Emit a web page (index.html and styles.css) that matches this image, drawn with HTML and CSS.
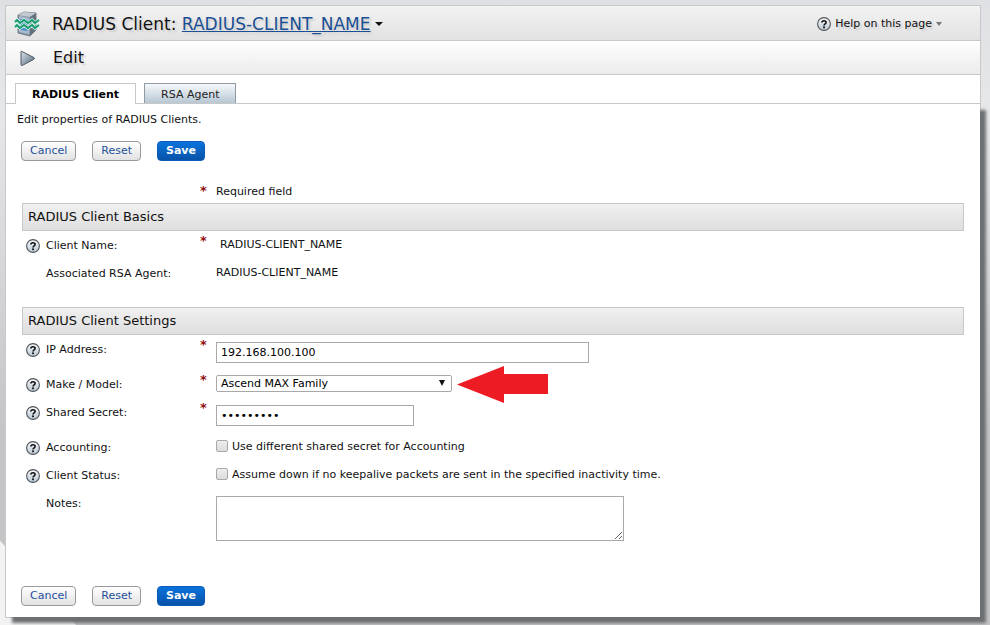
FILE: index.html
```html
<!DOCTYPE html>
<html lang="en">
<head>
    <meta charset="UTF-8">
    <meta name="viewport" content="width=device-width, initial-scale=1.0">
    <title>RADIUS Client: Edit</title>
    <link rel="stylesheet" href="styles.css">
</head>
<body>
    <!-- shared icons -->
    <svg class="defs" width="0" height="0" aria-hidden="true">
        <defs>
            <linearGradient id="helpFill" x1="0" y1="0" x2="0" y2="1">
                <stop offset="0" stop-color="#fafafb"/>
                <stop offset="1" stop-color="#b9c7d3"/>
            </linearGradient>
            <linearGradient id="playFill" x1="0" y1="0" x2="1" y2="1">
                <stop offset="0" stop-color="#dde4ea"/>
                <stop offset="1" stop-color="#4d6478"/>
            </linearGradient>
            <symbol id="help" viewBox="0 0 14 14">
                <circle cx="7" cy="7" r="6.4" fill="url(#helpFill)" stroke="#50565d" stroke-width="1.1"/>
                <path d="M4.9 5.5C4.9 3.1 9.1 3.1 9.1 5.4C9.1 6.8 7 6.8 7 8.5" fill="none" stroke="#111" stroke-width="1.6"/>
                <rect x="6.1" y="9.4" width="1.8" height="1.8" fill="#111"/>
            </symbol>
        </defs>
    </svg>

    <div class="page">
        <header class="title-bar">
            <svg class="client-icon" viewBox="0 0 26 26" width="26" height="26" aria-hidden="true">
                <path d="M4 4L10 1L22 2L22 19L16 25L4 22Z" fill="#8997a5" stroke="#5d6a77" stroke-width="0.8"/>
                <path d="M4 4L10 1L22 2L16 6Z" fill="#c3cad1"/>
                <path d="M16 6L22 2L22 19L16 25Z" fill="#64717f"/>
                <path d="M5 5L15 7V23L5 21Z" fill="#a9bccf"/>
                <path d="M6 8L14 9V20L6 19Z" fill="#4f8fc9"/>
                <path d="M1 11L3 9L6 12L10 9L14 12L18 9L21 12L25 9M1 16L3 14L6 17L10 14L14 17L18 14L21 17L25 14" fill="none" stroke="#d5f0e5" stroke-width="3.4"/>
                <path d="M1 11L3 9L6 12L10 9L14 12L18 9L21 12L25 9M1 16L3 14L6 17L10 14L14 17L18 14L21 17L25 14" fill="none" stroke="#159a70" stroke-width="1.9"/>
            </svg>
            <h1>RADIUS Client: <a href="#">RADIUS-CLIENT_NAME</a></h1>
            <span class="caret"></span>
            <a class="help-link" href="#">
                <svg class="help-icon"><use href="#help"/></svg>
                Help on this page
                <span class="caret caret-small"></span>
            </a>
        </header>

        <div class="action-bar">
            <svg class="play-icon" viewBox="0 0 16 17" width="16" height="17" aria-hidden="true">
                <path d="M2 1.5Q1 0.8 1 2V14.5Q1 16 2.4 15.4L14 9.2Q15.2 8.4 14 7.6Z" fill="url(#playFill)" stroke="#4f5a64"/>
            </svg>
            <h2>Edit</h2>
        </div>

        <main class="panel">
            <nav class="tabs">
                <a class="tab active" href="#">RADIUS Client</a>
                <a class="tab" href="#">RSA Agent</a>
            </nav>

            <form class="content">
                <p class="intro">Edit properties of RADIUS Clients.</p>
                <div class="buttons">
                    <button type="button">Cancel</button>
                    <button type="reset">Reset</button>
                    <button type="submit" class="save">Save</button>
                </div>

                <p class="required-note"><span class="star">*</span>Required field</p>

                <section>
                    <h3>RADIUS Client Basics</h3>
                    <div class="row">
                        <svg class="help-icon"><use href="#help"/></svg>
                        <span class="label">Client Name:</span>
                        <span class="star">*</span>
                        <div class="field indent">RADIUS-CLIENT_NAME</div>
                    </div>
                    <div class="row">
                        <span class="label">Associated RSA Agent:</span>
                        <div class="field">RADIUS-CLIENT_NAME</div>
                    </div>
                </section>

                <section>
                    <h3>RADIUS Client Settings</h3>
                    <div class="row">
                        <svg class="help-icon"><use href="#help"/></svg>
                        <label class="label" for="ip">IP Address:</label>
                        <span class="star">*</span>
                        <div class="field"><input type="text" class="ip" id="ip" value="192.168.100.100"></div>
                    </div>
                    <div class="row">
                        <svg class="help-icon"><use href="#help"/></svg>
                        <label class="label" for="model">Make / Model:</label>
                        <span class="star">*</span>
                        <div class="field select-field">
                            <select id="model">
                                <option>Ascend MAX Family</option>
                            </select>
                            <span class="caret select-caret"></span>
                            <svg class="pointer" viewBox="0 0 91 37" width="91" height="37" aria-hidden="true">
                                <path d="M0 18.5L47 0V8H91V28H47V37Z" fill="#ed1c24"/>
                            </svg>
                        </div>
                    </div>
                    <div class="row">
                        <svg class="help-icon"><use href="#help"/></svg>
                        <label class="label" for="secret">Shared Secret:</label>
                        <span class="star">*</span>
                        <div class="field"><input type="password" class="secret" id="secret" value="secret123"></div>
                    </div>
                    <div class="row">
                        <svg class="help-icon"><use href="#help"/></svg>
                        <span class="label">Accounting:</span>
                        <div class="field check">
                            <input type="checkbox" id="accounting">
                            <label for="accounting">Use different shared secret for Accounting</label>
                        </div>
                    </div>
                    <div class="row">
                        <svg class="help-icon"><use href="#help"/></svg>
                        <span class="label">Client Status:</span>
                        <div class="field check">
                            <input type="checkbox" id="status">
                            <label for="status">Assume down if no keepalive packets are sent in the specified inactivity time.</label>
                        </div>
                    </div>
                    <div class="row">
                        <label class="label" for="notes">Notes:</label>
                        <div class="field"><textarea id="notes"></textarea></div>
                    </div>
                </section>

                <div class="buttons bottom">
                    <button type="button">Cancel</button>
                    <button type="reset">Reset</button>
                    <button type="submit" class="save">Save</button>
                </div>
            </form>
        </main>
    </div>
</body>
</html>
```
FILE: styles.css
```css
* {
    box-sizing: border-box;
}

body {
    margin: 0;
    min-height: 100vh;
    font-family: Verdana, "DejaVu Sans", sans-serif;
    font-size: 11px;
    line-height: 14px;
    color: #111;
    background:
        linear-gradient(48deg, #f3f3f3 56px, transparent 57px),
        linear-gradient(to bottom, #dfe0e3, #e6e7e9 18%, #c4c4c6 70%, #c4c4c6);
}

h1, h2, h3, p {
    margin: 0;
    font-weight: normal;
}

.defs {
    position: absolute;
}

.page {
    padding: 5px 9px 7px 5px;
}

/* header bars */
.title-bar, .action-bar {
    display: flex;
    align-items: center;
    border: 1px solid #c8c8c8;
    border-bottom: none;
    text-shadow: 2px 2px 2px #ccc;
}

.title-bar {
    height: 35px;
    padding: 1px 0 0 8px;
    background: linear-gradient(to bottom, #f2f2f2, #e2e2e2);
}

.action-bar {
    height: 34px;
    padding: 1px 0 0 14px;
    background: linear-gradient(to bottom, #fff, #ebebeb);
}

.title-bar h1 {
    margin-left: 12px;
    font-size: 17px;
    line-height: 20px;
}

.title-bar h1 a {
    color: #1a4f94;
    text-decoration-skip-ink: none;
}

.action-bar h2 {
    margin-left: 17px;
    font-size: 16px;
    line-height: 20px;
}

.caret {
    border: 4px solid transparent;
    border-top-color: #111;
    border-bottom: none;
    margin-left: 4px;
}

.caret-small {
    border-width: 3px;
    border-top-width: 4px;
    border-bottom: none;
    border-top-color: #777;
    margin-left: 0;
}

.help-link {
    display: flex;
    align-items: center;
    gap: 4px;
    margin-left: auto;
    margin-right: 38px;
    color: #111;
    text-decoration: none;
}

.help-icon {
    width: 14px;
    height: 14px;
}

/* tabs */
.panel {
    background: #fff;
    border: 1px solid #c8c8c8;
}

.tabs {
    display: flex;
    gap: 8px;
    padding: 8px 9px 0;
    border-bottom: 1px solid #c8c8c8;
}

.tab {
    height: 20px;
    padding: 4px 16px 0;
    border: 1px solid #8e9aa4;
    border-bottom: none;
    background: linear-gradient(to bottom, #f6f8fa, #b7c7d3);
    color: #222;
    line-height: 14px;
    text-decoration: none;
}

.tab.active {
    height: 21px;
    margin-bottom: -1px;
    border-color: #c8c8c8;
    background: #fff;
    color: #000;
    font-weight: bold;
}

/* form */
.content {
    padding: 9px 16px 11px;
    box-shadow: 6px 6px 3px #6d7072;
}

.intro {
    margin-left: -5px;
}

.buttons {
    display: flex;
    gap: 16px;
    margin: 14px 0 24px -1px;
}

.buttons.bottom {
    margin: 38px 0 0 -1px;
}

button {
    height: 20px;
    padding: 0 8px;
    border: 1px solid #999;
    border-radius: 4px;
    background: linear-gradient(to bottom, #fff, #e2e2e2);
    color: #24509a;
    font: inherit;
    cursor: pointer;
}

button.save {
    border-color: #0a5cb8;
    background: linear-gradient(to bottom, #0a72dc, #0753a8);
    color: #fff;
    font-weight: bold;
}

.required-note {
    display: flex;
    padding-left: 178px;
    margin-bottom: 4px;
}

.star {
    width: 16px;
    height: 14px;
    color: #901010;
    font-size: 13px;
    font-weight: bold;
    line-height: 12px;
}

section + section {
    margin-top: 20px;
}

h3 {
    height: 28px;
    padding: 0 5px;
    border: 1px solid #c8c8c8;
    background: linear-gradient(to bottom, #f0f0f0, #dedede);
    font-size: 13px;
    line-height: 26px;
}

.row {
    display: grid;
    grid-template-columns: 20px 154px 16px 1fr;
    padding: 7px 0 7px 4px;
}

.row .help-icon {
    margin: 1px 0 -1px;
}

.label {
    grid-column: 2;
    height: 14px;
    line-height: 16px;
}

.row .star {
    line-height: 6px;
}

.field {
    grid-column: 4;
}

.indent {
    padding-left: 4px;
}

input, select, textarea {
    display: block;
    margin: 0;
    padding: 0 4px;
    border: 1px solid #a9a9a9;
    border-radius: 0;
    background: #fff;
    color: #000;
    font: inherit;
}

.ip, .secret {
    height: 21px;
    max-width: 100%;
}

.ip {
    width: 373px;
}

.secret {
    width: 198px;
}

.select-field {
    position: relative;
    height: 14px;
}

select {
    width: 236px;
    height: 17px;
    margin-top: -2px;
    border-radius: 2px;
    appearance: none;
}

.select-caret {
    position: absolute;
    left: 219px;
    top: 3px;
    border-width: 6px 3px 0;
    pointer-events: none;
}

.pointer {
    position: absolute;
    left: 241px;
    top: -11px;
}

.check {
    display: flex;
    gap: 4px;
}

.check input {
    width: 12px;
    height: 12px;
    padding: 0;
    border-radius: 2px;
    background: linear-gradient(to bottom, #eee, #dcdcdc);
    appearance: none;
}

textarea {
    width: 408px;
    height: 45px;
    max-width: 100%;
}
```
